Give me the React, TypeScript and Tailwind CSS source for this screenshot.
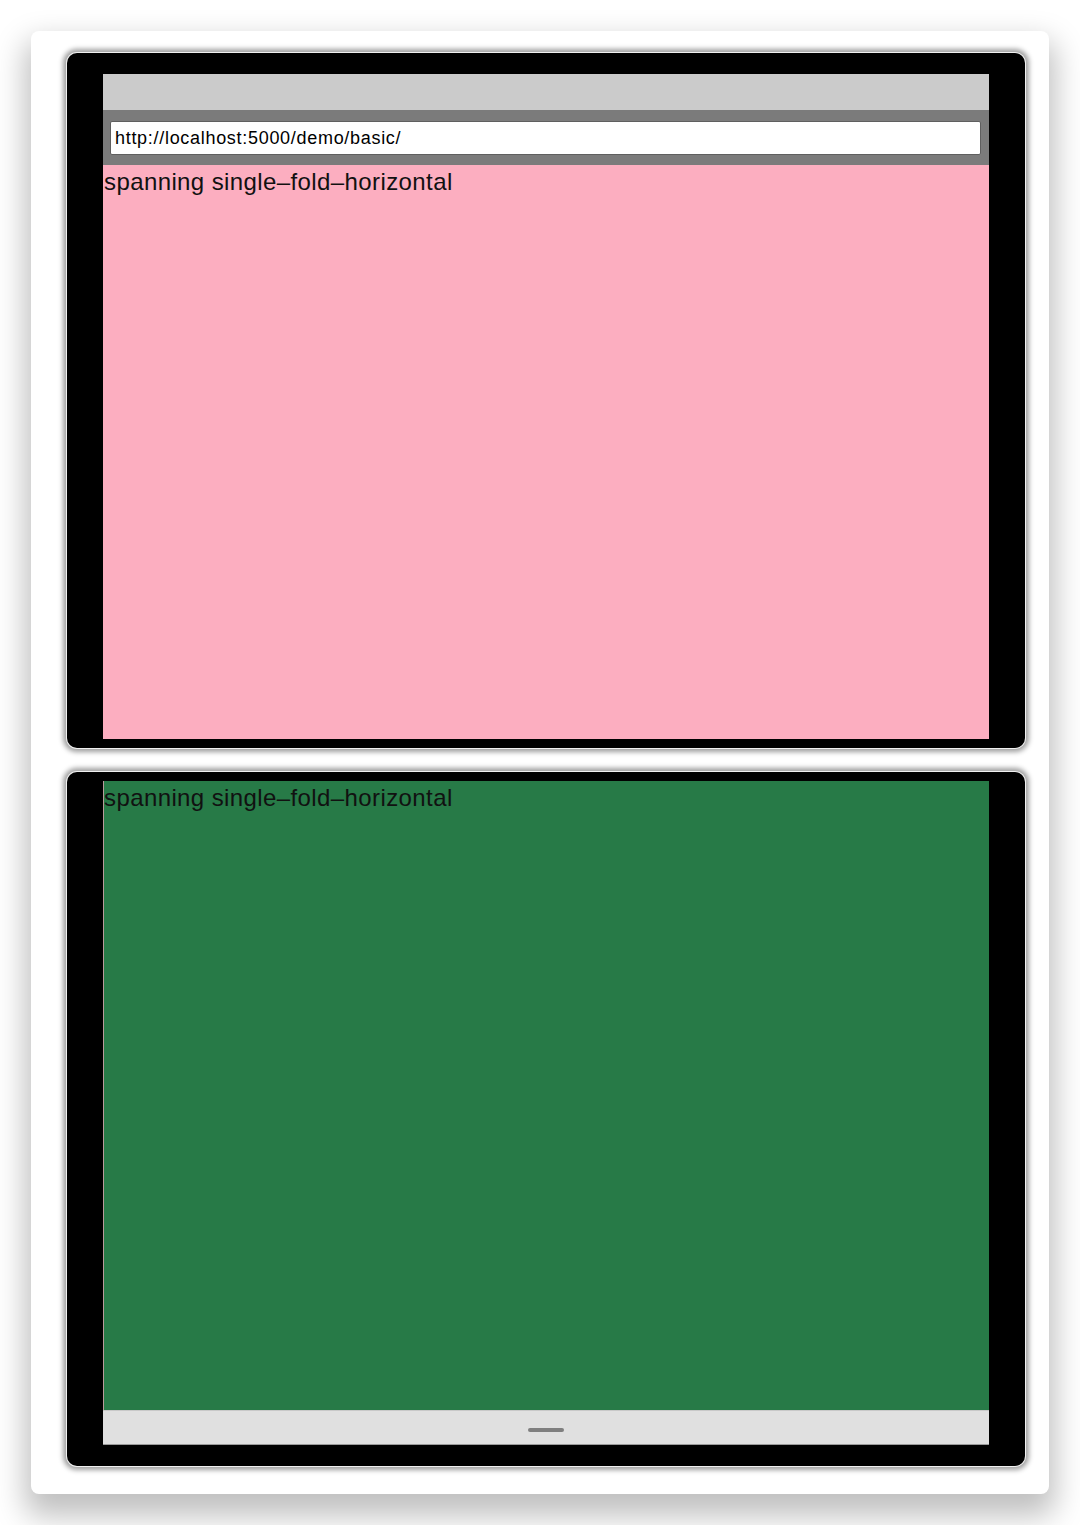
import React from "react";

const font = { fontFamily: '"Liberation Sans", Arial, sans-serif' };

export default function App() {
  return (
    <div className="w-[1080px] h-[1525px] bg-white pt-[31px] pl-[31px]" style={font}>
      <div className="w-[1018px] h-[1463px] bg-white rounded-[8px] shadow-[0_16px_30px_6px_rgba(0,0,0,0.25)] pl-[36px] pr-[24px] pt-[22px] flex flex-col gap-[24px]">
        {/* top device */}
        <div className="w-[958px] h-[695px] bg-black rounded-[10px] shadow-[0_0_0_1px_#f0f0f0,0_0_5px_4px_rgba(0,0,0,0.38)] pl-[36px] pr-[36px] pt-[21px] pb-[9px]">
          <div className="w-[886px] h-[665px] flex flex-col">
            <div className="h-[36px] bg-[#cbcbcb]" />
            <div className="h-[55px] bg-[#7b7b7b] pl-[7px] pr-[8px] pt-[11px]">
              <div className="h-[34px] bg-white border border-[#5f5f5f] rounded-[2px] flex items-center pl-[4px] text-[18px] tracking-[0.7px] text-black leading-none">
                http://localhost:5000/demo/basic/
              </div>
            </div>
            <div className="flex-1 bg-[#fcaec0]">
              <div className="pl-[1px] pt-[3px] text-[24px] tracking-[0.4px] leading-[28px] text-[#111]">
                spanning single–fold–horizontal
              </div>
            </div>
          </div>
        </div>
        {/* bottom device */}
        <div className="w-[958px] h-[694px] bg-black rounded-[10px] shadow-[0_0_0_1px_#f0f0f0,0_0_5px_4px_rgba(0,0,0,0.38)] pl-[36px] pr-[36px] pt-[9px] pb-[21px]">
          <div className="w-[886px] h-[664px] flex flex-col">
            <div className="flex-1 bg-[#277a47] border-l border-[#b89a9a]">
              <div className="pt-[3px] text-[24px] tracking-[0.4px] leading-[28px] text-[#111]">
                spanning single–fold–horizontal
              </div>
            </div>
            <div className="h-[35px] bg-[#e0e0e0] border-t border-[#c8c8c8] border-b border-b-[#9a9a9a] flex items-center justify-center">
              <div className="w-[36px] h-[4px] rounded-full bg-[#7f7f7f] mt-[4px]" />
            </div>
          </div>
        </div>
      </div>
    </div>
  );
}
